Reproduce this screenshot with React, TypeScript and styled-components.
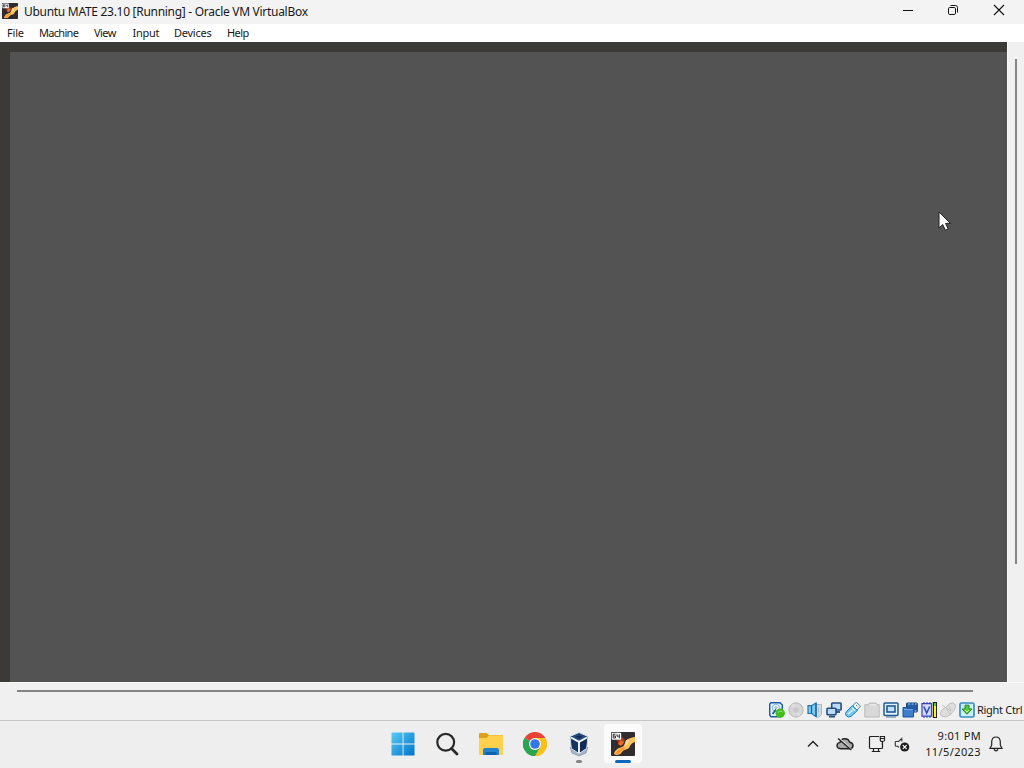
import React from "react";
import styled, { createGlobalStyle } from "styled-components";

const MENUS = [
  { label: "File", width: 32, spacing: -0.2 },
  { label: "Machine", width: 55, spacing: -0.7 },
  { label: "View", width: 38.5, spacing: -0.55 },
  { label: "Input", width: 41.5, spacing: -0.3 },
  { label: "Devices", width: 53, spacing: -0.25 },
  { label: "Help", width: 30, spacing: -0.6 },
];

function MachineIcon({ size }: { size: number }) {
  return (
    <svg width={size} height={size} viewBox="0 0 24 24">
      <rect width="24" height="24" rx="1" fill="#302c30" />
      <path d="M6 8L11 5L14 8L12 13L8 13Z" fill="#a93d1d" />
      <path d="M10 8L13 10L10 14L7 12Z" fill="#ef6b24" />
      <path d="M24 5V10C21 11 20 12 18 16C16 18 13 17 11 20C10 22 8 23 5 23L3 22C4 18 7 16 11 15C15 13 13 9 17 7C20 6 21 5 24 5Z" fill="#ffc15c" />
      <path d="M4 22C6 18 9 16 13 15L14 17C11 18 10 20 8 22Z" fill="#f99a35" />
      <path d="M15 8L18 8L17 12L14 14Z" fill="#ffe09c" />
      <rect x="0.7" y="0.7" width="9.5" height="7" rx="1" fill="#f8f8f8" />
      <path d="M4.5 2.2H2.2V6H4.5V4H2.2M6 2.2V4.2H8.6M8.3 2.2V6.3" fill="none" stroke="#333" strokeWidth="1" />
    </svg>
  );
}

function HardDiskIcon() {
  return (
    <svg width="16" height="16" viewBox="0 0 16 16">
      <path d="M2 .8H11L13.3 3V12.5L11 14.8H2L.7 13V2Z" fill="#e5f4ff" stroke="#205ba0" strokeWidth="1.5" />
      <circle cx="6.9" cy="5.8" r="3.6" fill="#eff9ff" stroke="#68a3d3" strokeWidth=".8" />
      <circle cx="6.9" cy="5.6" r="1" fill="#fff" stroke="#4c8abe" strokeWidth=".7" />
      <path d="M3.5 12L7 7.5" stroke="#205ba0" strokeWidth="1.8" />
      <circle cx="11.2" cy="11.2" r="4.7" fill="#42bd1d" />
      <path d="M9 10.5Q11 8 13.8 10" stroke="#8be565" fill="none" />
    </svg>
  );
}

function OpticalIcon() {
  return (
    <svg width="16" height="16" viewBox="0 0 16 16">
      <circle cx="8" cy="8" r="7.1" fill="#d6d6d6" stroke="#b6b6b6" />
      <path d="M8 8L3 3L6 1.7ZM8 8L13 13L10 14.5Z" fill="#dfdfdf" />
      <circle cx="8" cy="8" r="2.8" fill="#c8c8c8" />
      <circle cx="8" cy="8" r="1.1" fill="#e5e5e5" stroke="#bbb" strokeWidth=".7" />
    </svg>
  );
}

function AudioIcon() {
  return (
    <svg width="16" height="16" viewBox="0 0 16 16">
      <path d="M8 2.5H14.5V12.5L12 15H9Z" fill="#cfdae2" stroke="#a7b5bf" />
      <path d="M1 3.7H4.5L9 1V14.7L4.5 11.5H1Z" fill="#7ecbf0" stroke="#2277b4" strokeWidth="1.2" />
      <path d="M4.5 4V11.5M9 1V14.5" stroke="#1b65a0" strokeWidth="1.3" />
      <path d="M11 5.5Q12.3 8 11 10.5" fill="none" stroke="#a3bac7" />
    </svg>
  );
}

function NetworkIcon() {
  return (
    <svg width="16" height="16" viewBox="0 0 16 16">
      <rect x="5.7" y="1" width="9.4" height="7" rx=".8" fill="#bbdcf4" stroke="#264d80" strokeWidth="1.6" />
      <path d="M9 10H14" stroke="#264d80" strokeWidth="1.8" />
      <rect x="1" y="6.2" width="9" height="6.5" rx=".8" fill="#bbdcf4" stroke="#264d80" strokeWidth="1.6" />
      <path d="M3 14.6H9" stroke="#264d80" strokeWidth="1.8" />
    </svg>
  );
}

function UsbIcon() {
  return (
    <svg width="16" height="16" viewBox="0 0 16 16">
      <path d="M9.5 1.5L11.5 .5L15.5 4L14 6L12 8L8 4Z" fill="#eef7fc" stroke="#5b8daf" />
      <path d="M7.4 3.7L12.5 8.5L6 14.4Q3 16.2 1 13.5Q-.5 11.5 2 9Z" fill="#78c9f0" stroke="#247cb5" />
      <path d="M7.3 6L10 8.7M3 12L8 8" stroke="#dff6ff" strokeWidth="1.2" />
      <path d="M11 3L12 4M13 4.5L12.5 5" stroke="#487793" />
    </svg>
  );
}

function FolderIcon() {
  return (
    <svg width="16" height="16" viewBox="0 0 16 16">
      <path d="M.8 2.7H4.5L5.5 1H12L13 2.7H15.2V15H.8Z" fill="#d8d8d8" stroke="#bababa" />
      <path d="M6 2.8H12" stroke="#f0f0f0" strokeWidth="1.2" />
    </svg>
  );
}

function DisplayIcon() {
  return (
    <svg width="16" height="16" viewBox="0 0 16 16">
      <rect x="1" y="1" width="14" height="12.5" rx="1" fill="#dff1ff" stroke="#235a91" strokeWidth="1.5" />
      <rect x="4" y="4" width="8" height="6" fill="#c1e1f7" stroke="#235a91" strokeWidth="1.6" />
      <path d="M3 15H13" stroke="#6d8ba7" strokeWidth="1.2" />
    </svg>
  );
}

function RecordingIcon() {
  return (
    <svg width="16" height="16" viewBox="0 0 16 16">
      <rect x="4.5" y="1" width="10.8" height="9" rx=".7" fill="#245ca8" stroke="#123e7c" />
      <path d="M6 2H8M9.5 2H11.5M13 2H14.5M12.5 9H14.5" stroke="#a7d7ff" strokeWidth="1.2" />
      <path d="M1 5.5H4L5.5 6.5H11.5V15H1Z" fill="#407dca" stroke="#17559d" />
      <path d="M2 7.5H11" stroke="#72a8e3" />
    </svg>
  );
}

function FeaturesIcon() {
  return (
    <svg width="16" height="16" viewBox="0 0 16 16">
      <path d="M1 1.7H10.5V14.2H1Z" fill="#d7ddff" stroke="#3745b6" strokeWidth="1.2" />
      <path d="M2.8 4.5L5.7 11L8.7 4.5" fill="none" stroke="#3249c6" strokeWidth="1.6" />
      <path d="M3 0V2M6 0V2M9 0V2M3 14V16M6 14V16M9 14V16" stroke="#3745b6" />
      <path d="M11.8 0H16V16H11.8Z" fill="#202414" />
      <path d="M13 1H15V4H13Z" fill="#50cb42" />
      <path d="M13 4H15V15H13Z" fill="#fff01e" />
    </svg>
  );
}

function MouseIcon() {
  return (
    <svg width="16" height="16" viewBox="0 0 16 16">
      <path d="M7 4.5Q9 .8 13 .8Q16.5 2 15 7L10 13Q5 16.5 1.5 14Q-.8 10 3 7Z" fill="#dedede" stroke="#bebebe" />
      <path d="M2 3L6 6L11 9L9 4M6 6L10 12" fill="none" stroke="#c2c2c2" />
    </svg>
  );
}

function KeyboardIcon() {
  return (
    <svg width="16" height="16" viewBox="0 0 16 16">
      <rect x="1" y="1" width="14" height="14" rx="1.5" fill="#c9edfb" stroke="#3b8dbe" strokeWidth="1.7" />
      <path d="M6 3.2H10V7H13L8 12.2L3 7H6Z" fill="#5cca32" stroke="#21872b" />
      <path d="M6 8L8 10L10 8" stroke="#c5ff99" fill="none" />
    </svg>
  );
}

const DEVICE_ICONS = [
  HardDiskIcon, OpticalIcon, AudioIcon, NetworkIcon, UsbIcon, FolderIcon,
  DisplayIcon, RecordingIcon, FeaturesIcon, MouseIcon, KeyboardIcon,
];

function WindowsIcon() {
  return (
    <svg width="24" height="24" viewBox="0 0 24 24">
      <defs>
        <linearGradient id="win" x1="0" y1="0" x2="1" y2="1">
          <stop stopColor="#56cdf5" />
          <stop offset="1" stopColor="#0072ca" />
        </linearGradient>
      </defs>
      <path d="M1 .5H11.6V11.6H.5V1Q.5.5 1 .5ZM12.5.5H23Q23.5.5 23.5 1V11.6H12.5ZM.5 12.5H11.6V23.5H1Q.5 23.5.5 23ZM12.5 12.5H23.5V23Q23.5 23.5 23 23.5H12.5Z" fill="url(#win)" />
    </svg>
  );
}

function SearchIcon() {
  return (
    <svg width="24" height="24" viewBox="0 0 24 24" fill="none" stroke="#292929">
      <circle cx="10.7" cy="10.3" r="8.4" strokeWidth="2.2" />
      <path d="M16.5 16.5L22 22" strokeWidth="2.8" strokeLinecap="round" />
    </svg>
  );
}

function ExplorerIcon() {
  return (
    <svg width="26" height="24" viewBox="0 0 26 24">
      <path d="M1 2Q1 1 2 1H8.5L11 3H24Q25 3 25 4V12H1Z" fill="#dca019" />
      <path d="M1 6H8.5L11 3.2H24Q25 3.2 25 4.5V22Q25 23 24 23H2Q1 23 1 22Z" fill="#ffd04b" />
      <path d="M5 23V18Q5 16 7 16H19Q21 16 21 18V23Z" fill="#2383cf" />
      <path d="M7.5 20H18.5V23H7.5Z" fill="#0d64a9" />
    </svg>
  );
}

function ChromeIcon() {
  return (
    <svg width="24" height="24" viewBox="0 0 24 24">
      <path d="M12 12L1.6 6A12 12 0 0 1 22.4 6Z" fill="#e84235" />
      <path d="M12 12L22.4 6A12 12 0 0 1 12 24Z" fill="#fbc11b" />
      <path d="M12 12V24A12 12 0 0 1 1.6 6Z" fill="#2aa450" />
      <path d="M12 6H22.4A12 12 0 0 1 12 24L17.2 15Z" fill="#fbc11b" />
      <path d="M6.8 15L1.6 6A12 12 0 0 0 12 24L17.2 15Z" fill="#2aa450" />
      <circle cx="12" cy="12" r="6" fill="#fff" />
      <circle cx="12" cy="12" r="4.8" fill="#3478e5" />
    </svg>
  );
}

function VirtualBoxIcon() {
  return (
    <svg width="22" height="26" viewBox="0 0 22 26">
      <path d="M2 16L4 22L11 25L18 22L20 16L11 21Z" fill="#a8b4cb" stroke="#7787a5" strokeWidth=".6" />
      <path d="M11 1.5L20 5.5L18.7 17.5L11 22.5L3.3 17.5L2 5.5Z" fill="#193b69" stroke="#d4dfeb" strokeWidth="1" />
      <path d="M11 2.5L19 6L11 10L3 6Z" fill="#274d7d" />
      <path d="M3 7L10 11V21L4.3 17Z" fill="#15345f" />
      <path d="M19 7L12 11V21L17.7 17Z" fill="#122b50" />
      <path d="M3 6.5L11 10.8L19 6.5M11 11V22" fill="none" stroke="#eff5f9" strokeWidth="1.9" />
      <path d="M7 5.8L11 4.2L15 5.8L11 7.8Z" fill="#122d55" />
    </svg>
  );
}

function CloudOffIcon() {
  return (
    <svg width="18" height="16" viewBox="0 0 18 16" fill="none">
      <path d="M4.5 12.7Q1 12.5 1 9.5Q1.2 6.8 4 6.4Q5.3 2.6 9 2.8Q12.7 3 13.5 6.2Q16.8 6.4 17 9.6Q16.7 12.8 13.5 12.7Z" fill="#aaa" stroke="#222" strokeWidth="1.4" />
      <path d="M3 2L16 14" stroke="#eee" strokeWidth="1.3" />
      <path d="M2 2.5L15.3 14" stroke="#222" strokeWidth="1.4" />
    </svg>
  );
}

function EthernetIcon() {
  return (
    <svg width="18" height="18" viewBox="0 0 18 18" fill="none" stroke="#222" strokeWidth="1.2">
      <path d="M11 1.5H2.5Q1.5 1.5 1.5 2.5V12.5Q1.5 13.5 2.5 13.5H13.5Q14.5 13.5 14.5 12.5V8M5.5 13.5V16.5M10.5 13.5V16.5M3.8 16.5H12.2" />
      <path d="M12.3 1.5H16.5V5Q16.5 6.5 14.4 6.5Q12.3 6.5 12.3 5ZM12.3 3.5H16.5M14.4 6.5V10" />
    </svg>
  );
}

function MutedIcon() {
  return (
    <svg width="16" height="16" viewBox="0 0 16 16" fill="none">
      <path d="M7.8 5.5V2.5L4.5 5.5H2Q1.3 5.5 1.3 6.2V9.5Q1.3 10.3 2 10.3H4L5 11.5" stroke="#333" strokeWidth="1.1" />
      <circle cx="10.7" cy="11" r="4.6" fill="#202020" />
      <path d="M8.8 9.1L12.6 12.9M12.6 9.1L8.8 12.9" stroke="#fff" strokeWidth="1.2" />
    </svg>
  );
}

export default function App() {
  return (
    <Desktop>
      <GlobalStyle />
      <TitleBar>
        <MachineIcon size={16} />
        <Title>Ubuntu MATE 23.10 [Running] - Oracle VM VirtualBox</Title>
        <WindowControls>
          <svg width="12" height="12" viewBox="0 0 12 12"><path d="M1 6.5H11" stroke="#111" /></svg>
          <svg width="12" height="12" viewBox="0 0 12 12" fill="none" stroke="#111">
            <rect x="1.5" y="3.5" width="7" height="7" rx="1.3" />
            <path d="M3.5 1.5H8.5Q10.5 1.5 10.5 3.5V8.5" />
          </svg>
          <svg width="12" height="12" viewBox="0 0 12 12"><path d="M1 1L11 11M11 1L1 11" stroke="#111" strokeWidth="1.1" /></svg>
        </WindowControls>
      </TitleBar>
      <MenuBar>
        {MENUS.map((menu) => (
          <MenuItem key={menu.label} $width={menu.width} $spacing={menu.spacing}>{menu.label}</MenuItem>
        ))}
      </MenuBar>
      <Workspace>
        <GuestScreen>
          <GuestWindow />
          <Pointer width="14" height="21" viewBox="0 0 14 21">
            <path d="M1 1V17L4.7 13.5L7.4 19.3L10.2 18L7.6 12.4H12.4Z" fill="#fff" stroke="#222" strokeWidth="1" />
          </Pointer>
        </GuestScreen>
        <VerticalTrack><VerticalThumb /></VerticalTrack>
      </Workspace>
      <HorizontalTrack><HorizontalThumb /></HorizontalTrack>
      <StatusBar>
        <DeviceIcons>
          {DEVICE_ICONS.map((Icon, index) => <Icon key={index} />)}
        </DeviceIcons>
        <HostKey>Right Ctrl</HostKey>
      </StatusBar>
      <Taskbar>
        <TaskApps>
          <TaskButton><WindowsIcon /></TaskButton>
          <TaskButton><SearchIcon /></TaskButton>
          <TaskButton><ExplorerIcon /></TaskButton>
          <TaskButton><ChromeIcon /></TaskButton>
          <TaskButton><VirtualBoxIcon /><Indicator /></TaskButton>
          <TaskButton $active><MachineIcon size={24} /><Indicator $active /></TaskButton>
        </TaskApps>
        <Tray>
          <TraySlot $width={26}>
            <svg width="12" height="8" viewBox="0 0 12 8" fill="none"><path d="M1 6.5L6 1.5L11 6.5" stroke="#222" strokeWidth="1.4" /></svg>
          </TraySlot>
          <TraySlot $width={38}><CloudOffIcon /></TraySlot>
          <TraySlot $width={26}><EthernetIcon /></TraySlot>
          <TraySlot $width={24}><MutedIcon /></TraySlot>
          <Clock>
            <Time>9:01 PM</Time>
            <DateText>11/5/2023</DateText>
          </Clock>
          <TraySlot $width={30}>
            <svg width="14" height="16" viewBox="0 0 14 16" fill="none" stroke="#222" strokeWidth="1.2">
              <path d="M2.7 9V5.6Q3 1 7 1Q11 1 11.3 5.6V9L13 12.3H1ZM5 12.5Q5.3 14.8 7 14.8Q8.7 14.8 9 12.5" />
            </svg>
          </TraySlot>
        </Tray>
      </Taskbar>
    </Desktop>
  );
}

const GlobalStyle = createGlobalStyle`
  * {
    box-sizing: border-box;
  }
  body {
    margin: 0;
    overflow: hidden;
    font-family: "Noto Sans", "Open Sans", sans-serif;
    color: #181818;
  }
  svg {
    display: block;
    flex-shrink: 0;
  }
`;

const Desktop = styled.div`
  display: flex;
  flex-direction: column;
  width: 1024px;
  height: 768px;
  background: #f0f0f0;
`;

const TitleBar = styled.header`
  display: flex;
  align-items: center;
  height: 24px;
  padding: 0 19px 2px 2px;
  background: #f3f3f3;
`;

const Title = styled.div`
  margin-left: 6px;
  font-size: 12px;
  line-height: 18px;
  letter-spacing: -0.29px;
  white-space: nowrap;
  padding-top: 1px;
`;

const WindowControls = styled.div`
  display: flex;
  gap: 33px;
  margin-left: auto;
  padding-bottom: 2px;
  svg:last-child {
    margin-left: 1px;
  }
`;

const MenuBar = styled.nav`
  display: flex;
  align-items: center;
  height: 18px;
  padding-left: 7px;
  background: #fff;
`;

const MenuItem = styled.div<{ $width: number; $spacing: number }>`
  width: ${({ $width }) => $width}px;
  font-size: 11px;
  line-height: 18px;
  letter-spacing: ${({ $spacing }) => $spacing}px;
  white-space: nowrap;
`;

const Workspace = styled.main`
  display: flex;
  height: 640px;
`;

const GuestScreen = styled.div`
  position: relative;
  width: 1007px;
  padding: 10px 0 0 10px;
  background: #3b3a37;
`;

const GuestWindow = styled.div`
  height: 100%;
  background: #535353;
`;

const Pointer = styled.svg`
  position: absolute;
  left: 938px;
  top: 169px;
`;

const VerticalTrack = styled.div`
  width: 17px;
  padding: 17px 0 0 7px;
  border-left: 1px solid #fafafa;
`;

const VerticalThumb = styled.div`
  width: 2px;
  height: 505px;
  background: #858585;
`;

const HorizontalTrack = styled.div`
  height: 18px;
  padding: 7px 0 0 17px;
  border-top: 1px solid #fafafa;
`;

const HorizontalThumb = styled.div`
  width: 956px;
  height: 2px;
  background: #858585;
`;

const StatusBar = styled.div`
  display: flex;
  align-items: center;
  justify-content: flex-end;
  height: 20px;
  padding-right: 1px;
`;

const DeviceIcons = styled.div`
  display: flex;
  gap: 3px;
  margin-right: 2px;
`;

const HostKey = styled.div`
  width: 46px;
  font-size: 11px;
  line-height: 18px;
  letter-spacing: -0.3px;
  white-space: nowrap;
`;

const Taskbar = styled.footer`
  display: flex;
  height: 48px;
  padding-left: 384px;
  background: #eee;
  border-top: 1px solid #c5c5c5;
`;

const TaskApps = styled.div`
  display: flex;
  gap: 6px;
  padding-top: 3px;
`;

const TaskButton = styled.div<{ $active?: boolean }>`
  position: relative;
  display: flex;
  align-items: center;
  justify-content: center;
  width: 38px;
  height: 39px;
  border-radius: 4px;
  background: ${({ $active }) => ($active ? "#fbfbfb" : "transparent")};
`;

const Indicator = styled.div<{ $active?: boolean }>`
  position: absolute;
  bottom: 0;
  width: ${({ $active }) => ($active ? 16 : 6)}px;
  height: 3px;
  border-radius: 2px;
  background: ${({ $active }) => ($active ? "#0868bd" : "#858585")};
`;

const Tray = styled.div`
  display: flex;
  align-items: center;
  height: 46px;
  margin-left: auto;
  padding-right: 13px;
`;

const TraySlot = styled.div<{ $width: number }>`
  display: flex;
  justify-content: center;
  width: ${({ $width }) => $width}px;
`;

const Clock = styled.div`
  display: flex;
  flex-direction: column;
  align-items: flex-end;
  width: 67px;
  font-size: 11px;
  line-height: 16px;
  white-space: nowrap;
`;

const Time = styled.div`
  letter-spacing: 0.3px;
`;

const DateText = styled.div`
  letter-spacing: 0.4px;
`;
